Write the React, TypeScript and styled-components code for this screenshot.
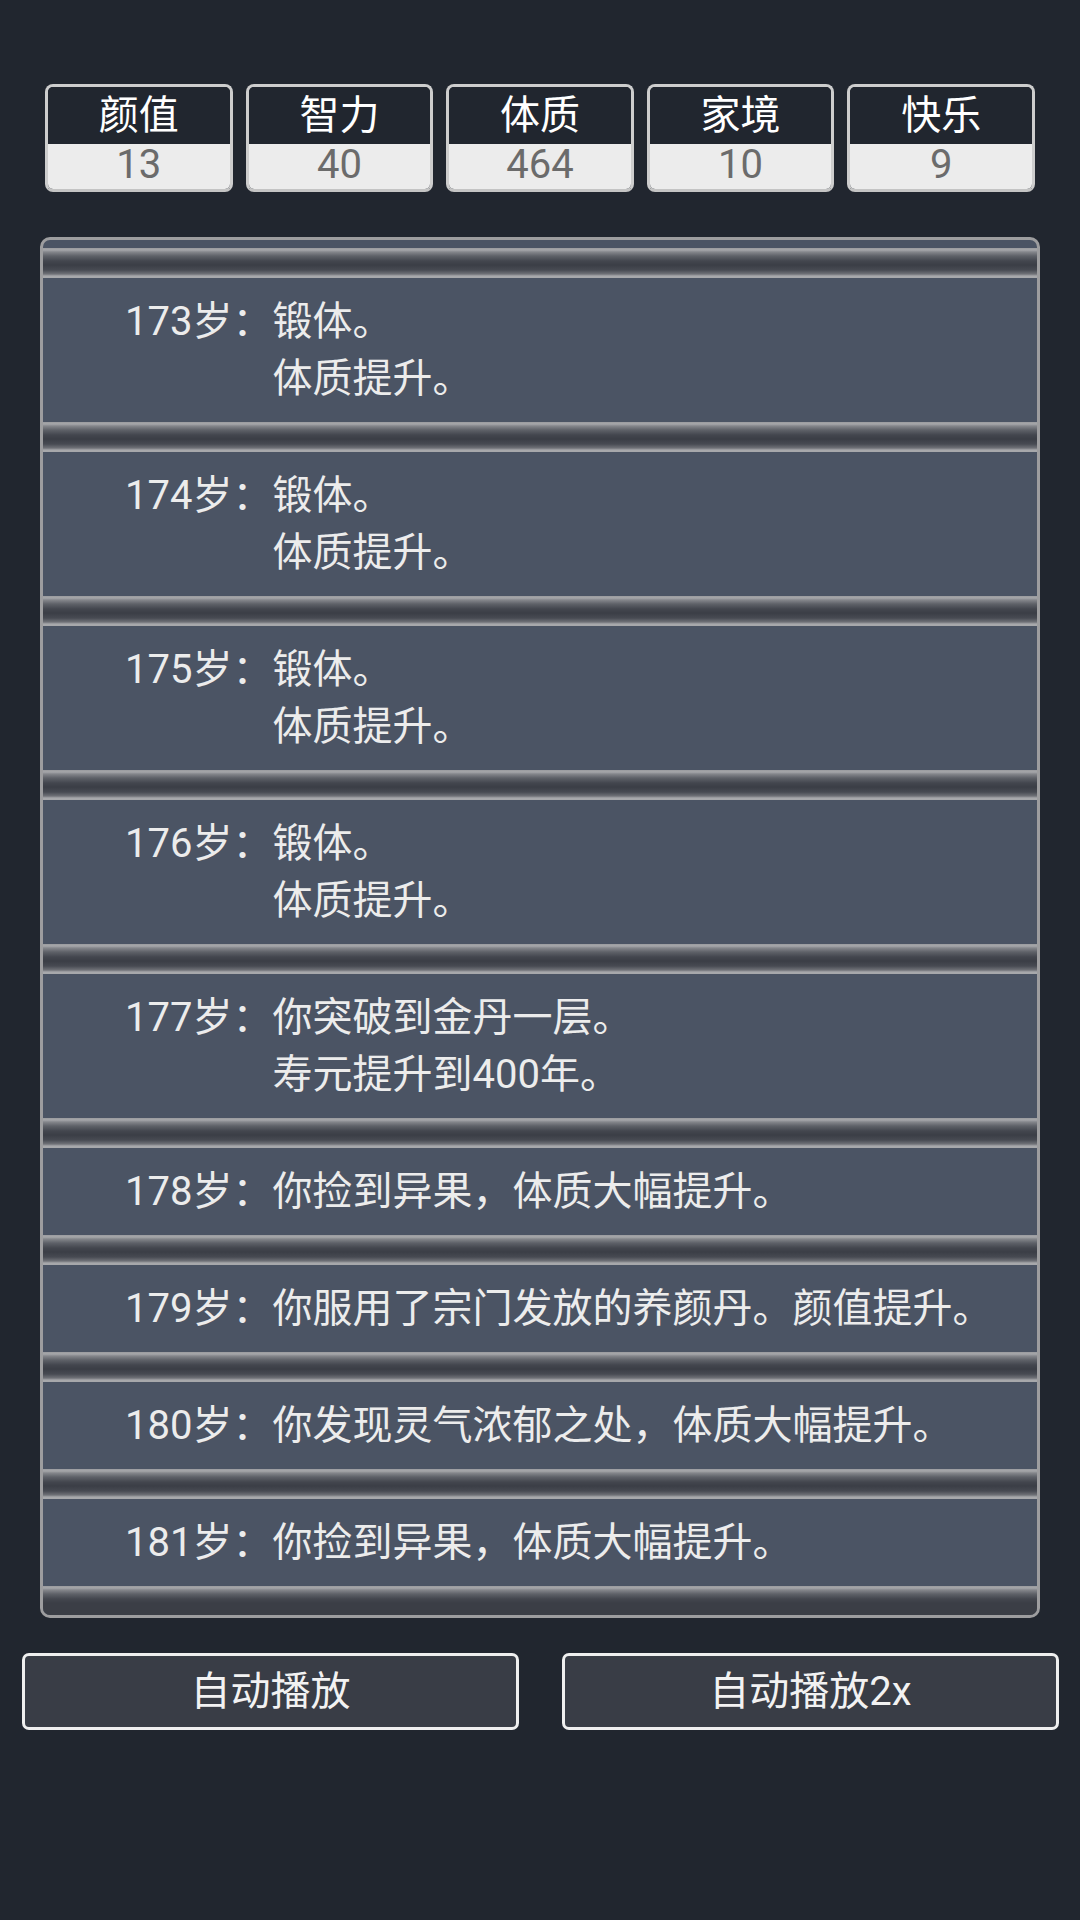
import React from "react";
import styled, { createGlobalStyle, css } from "styled-components";

const GlobalStyle = createGlobalStyle`
  html, body {
    margin: 0;
    padding: 0;
    background: #21262f;
  }
  * {
    box-sizing: border-box;
  }
`;

const stats = [
  { label: "颜值", value: 13 },
  { label: "智力", value: 40 },
  { label: "体质", value: 464 },
  { label: "家境", value: 10 },
  { label: "快乐", value: 9 },
];

const logs = [
  { age: 173, lines: ["锻体。", "体质提升。"] },
  { age: 174, lines: ["锻体。", "体质提升。"] },
  { age: 175, lines: ["锻体。", "体质提升。"] },
  { age: 176, lines: ["锻体。", "体质提升。"] },
  { age: 177, lines: ["你突破到金丹一层。", "寿元提升到400年。"] },
  { age: 178, lines: ["你捡到异果，体质大幅提升。"] },
  { age: 179, lines: ["你服用了宗门发放的养颜丹。颜值提升。"] },
  { age: 180, lines: ["你发现灵气浓郁之处，体质大幅提升。"] },
  { age: 181, lines: ["你捡到异果，体质大幅提升。"] },
];

export default function App() {
  return (
    <>
      <GlobalStyle />
      <Page>
        <StatsRow>
          {stats.map((s) => (
            <StatBox key={s.label}>
              <StatLabel>{s.label}</StatLabel>
              <StatValue>{s.value}</StatValue>
            </StatBox>
          ))}
        </StatsRow>

        <Panel>
          <List>
            {logs.map((log) => (
              <React.Fragment key={log.age}>
                <Separator />
                <Item>
                  <Age>{log.age}岁：</Age>
                  <Lines>
                    {log.lines.map((line) => (
                      <Line key={line}>{line}</Line>
                    ))}
                  </Lines>
                </Item>
              </React.Fragment>
            ))}
            <Separator $end />
          </List>
        </Panel>

        <ButtonRow>
          <Button>自动播放</Button>
          <Button>自动播放2x</Button>
        </ButtonRow>
      </Page>
    </>
  );
}

const Page = styled.div`
  width: 1080px;
  min-height: 1920px;
  background: #21262f;
  padding-top: 84px;
  font-family: Roboto, "Noto Sans CJK SC", sans-serif;
`;

const StatsRow = styled.div`
  display: flex;
  gap: 13px;
  padding: 0 45px;
`;

const StatBox = styled.div`
  flex: 1;
  height: 108px;
  border: 3px solid #cdcdcd;
  border-bottom-color: #c4c4c4;
  border-radius: 8px;
  overflow: hidden;
  display: flex;
  flex-direction: column;
`;

const StatLabel = styled.div`
  height: 57px;
  background: #21262f;
  color: #ffffff;
  font-size: 40px;
  line-height: 57px;
  text-align: center;
`;

const StatValue = styled.div`
  flex: 1;
  background: #ececec;
  color: #6b6b6b;
  font-size: 40px;
  line-height: 41px;
  text-align: center;
`;

const Panel = styled.div`
  margin: 45px 40px 0;
  width: 1000px;
  height: 1381px;
  border: 3px solid #9d9d9f;
  border-radius: 10px;
  background: #4b5464;
  overflow: hidden;
`;

const List = styled.div`
  padding-top: 8px;
  display: flex;
  flex-direction: column;
`;

const Separator = styled.div<{ $end?: boolean }>`
  flex: none;
  height: 30px;
  background: linear-gradient(
    to bottom,
    #9a9b9f 0px,
    #a6a7aa 2px,
    #84868b 4px,
    #5e6168 8px,
    #43464e 13px,
    #3b3e46 17px,
    #474a52 22px,
    #6f7177 26px,
    #a7a8ab 28px,
    #a7a8ab 30px
  );
  ${(p) =>
    p.$end &&
    css`
      background: linear-gradient(
        to bottom,
        #9a9b9f 0px,
        #a6a7aa 2px,
        #84868b 4px,
        #5e6168 8px,
        #43464e 13px,
        #3b3e46 17px,
        #3b3e46 30px
      );
    `}
`;

const Item = styled.div`
  display: flex;
  padding: 15px 0 15px 82px;
  color: #ececec;
  font-size: 40px;
  line-height: 57px;
  white-space: nowrap;
`;

const Age = styled.div`
  flex: none;
`;

const Lines = styled.div`
  display: flex;
  flex-direction: column;
`;

const Line = styled.div``;

const ButtonRow = styled.div`
  display: flex;
  gap: 43px;
  padding: 35px 21px 0 22px;
`;

const Button = styled.button`
  flex: 1;
  height: 77px;
  background: #393d46;
  border: 3px solid #efefef;
  border-radius: 7px;
  color: #f2f2f2;
  font-family: Roboto, "Noto Sans CJK SC", sans-serif;
  font-size: 40px;
  line-height: 1;
  padding: 0;
`;
